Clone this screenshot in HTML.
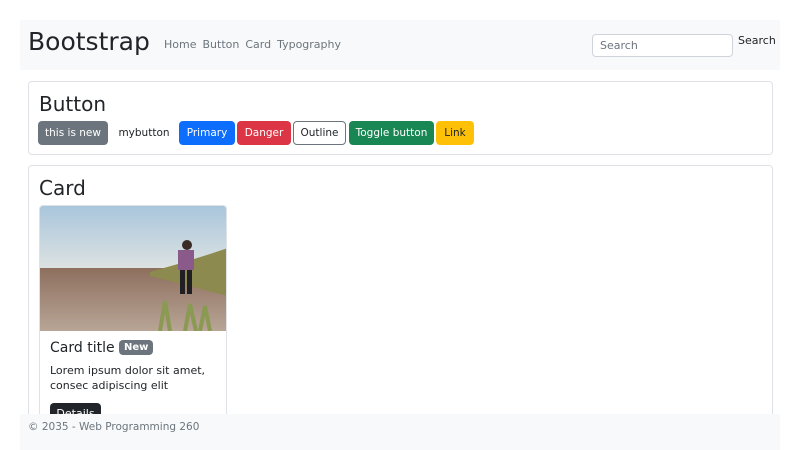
<!DOCTYPE html>
<html><head><style>
*{box-sizing:border-box;margin:0;padding:0}
html,body{width:800px;height:450px;overflow:hidden}
body{background:#fff;font-family:"DejaVu Sans","Liberation Sans",sans-serif;color:#212529;position:relative}
.nav{position:absolute;left:20px;top:20px;width:760px;height:50px;background:#f8f9fa}
.brand{position:absolute;left:8px;top:7px;font-size:25px;color:#212529}
.links{position:absolute;left:144px;top:18px;font-size:11px;color:#6c757d}
.links span{margin-right:6px}
.search{position:absolute;left:572px;top:14px;width:141px;height:23px;border:1px solid #ced4da;border-radius:4px;background:#fff;font-size:11px;color:#6c757d;padding:4px 7px}
.sbtn{position:absolute;left:718px;top:14px;font-size:11px}
.box{position:absolute;left:28px;width:745px;border:1px solid #dee2e6;border-radius:4px;background:#fff}
h2{font-weight:400;font-size:20px;position:absolute;left:10px}
.b{position:absolute;top:39px;height:24px;border-radius:4px;font-size:10.5px;line-height:22px;text-align:center;border:1px solid transparent;color:#fff;white-space:nowrap}
.card{position:absolute;left:10px;top:39px;width:188px;height:240px;border:1px solid #dee2e6;border-radius:4px;overflow:hidden}
.footer{position:absolute;left:20px;top:414px;width:760px;height:36px;background:#f8f9fa;font-size:10.5px;color:#6c757d;padding:7px 8px}
</style></head><body>
<div class="nav"><div class="brand">Bootstrap</div>
<div class="links"><span>Home</span><span>Button</span><span>Card</span><span>Typography</span></div>
<div class="search">Search</div><div class="sbtn">Search</div></div>

<div class="box" style="top:81px;height:74px">
<h2 style="top:10px">Button</h2>
<div class="b" style="left:9px;width:70px;background:#6c757d">this is new</div>
<div class="b" style="left:82px;width:66px;color:#212529">mybutton</div>
<div class="b" style="left:150px;width:56px;background:#0d6efd">Primary</div>
<div class="b" style="left:208px;width:54px;background:#dc3545">Danger</div>
<div class="b" style="left:264px;width:53px;border-color:#6c757d;color:#212529">Outline</div>
<div class="b" style="left:320px;width:85px;background:#198754">Toggle button</div>
<div class="b" style="left:407px;width:38px;background:#ffc107;color:#212529">Link</div>
</div>

<div class="box" style="top:165px;height:270px">
<h2 style="top:10px">Card</h2>
<div class="card">
<svg width="188" height="125" viewBox="0 0 188 125" style="display:block">
<defs><linearGradient id="s" x1="0" y1="0" x2="0" y2="1"><stop offset="0" stop-color="#a9c6dc"/><stop offset="1" stop-color="#dfe3e2"/></linearGradient>
<linearGradient id="g" x1="0" y1="0" x2="0" y2="1"><stop offset="0" stop-color="#8e6f5e"/><stop offset="1" stop-color="#b8a596"/></linearGradient></defs>
<rect width="188" height="65" fill="url(#s)"/>
<rect y="62" width="188" height="63" fill="url(#g)"/>
<path d="M110 66 Q150 55 188 42 L188 90 Q150 80 110 70Z" fill="#8c8a4e"/>
<path d="M120 125 L125 95 L130 125 M145 125 L150 98 L156 125 M160 125 L165 100 L170 125" stroke="#8b9a52" stroke-width="4" fill="none"/>
<rect x="138" y="44" width="16" height="20" fill="#8a5a8a"/><circle cx="147" cy="39" r="5" fill="#3a2a25"/>
<rect x="140" y="64" width="5" height="24" fill="#1f1f24"/><rect x="147" y="64" width="5" height="24" fill="#1f1f24"/>
</svg>
<div style="position:absolute;left:10px;top:134px;font-size:14px">Card title <span style="background:#6c757d;color:#fff;font-size:10px;font-weight:700;padding:2px 5px;border-radius:4px;vertical-align:2px">New</span></div>
<div style="position:absolute;left:10px;top:157px;font-size:11px;line-height:15px;width:170px">Lorem ipsum dolor sit amet, consec adipiscing elit</div>
<div style="position:absolute;left:10px;top:197px;width:51px;height:24px;background:#212529;color:#fff;border-radius:4px;font-size:11px;text-align:center;line-height:22px">Details</div>
</div>
</div>

<div class="footer">© 2035 - Web Programming 260</div>
</body></html>
